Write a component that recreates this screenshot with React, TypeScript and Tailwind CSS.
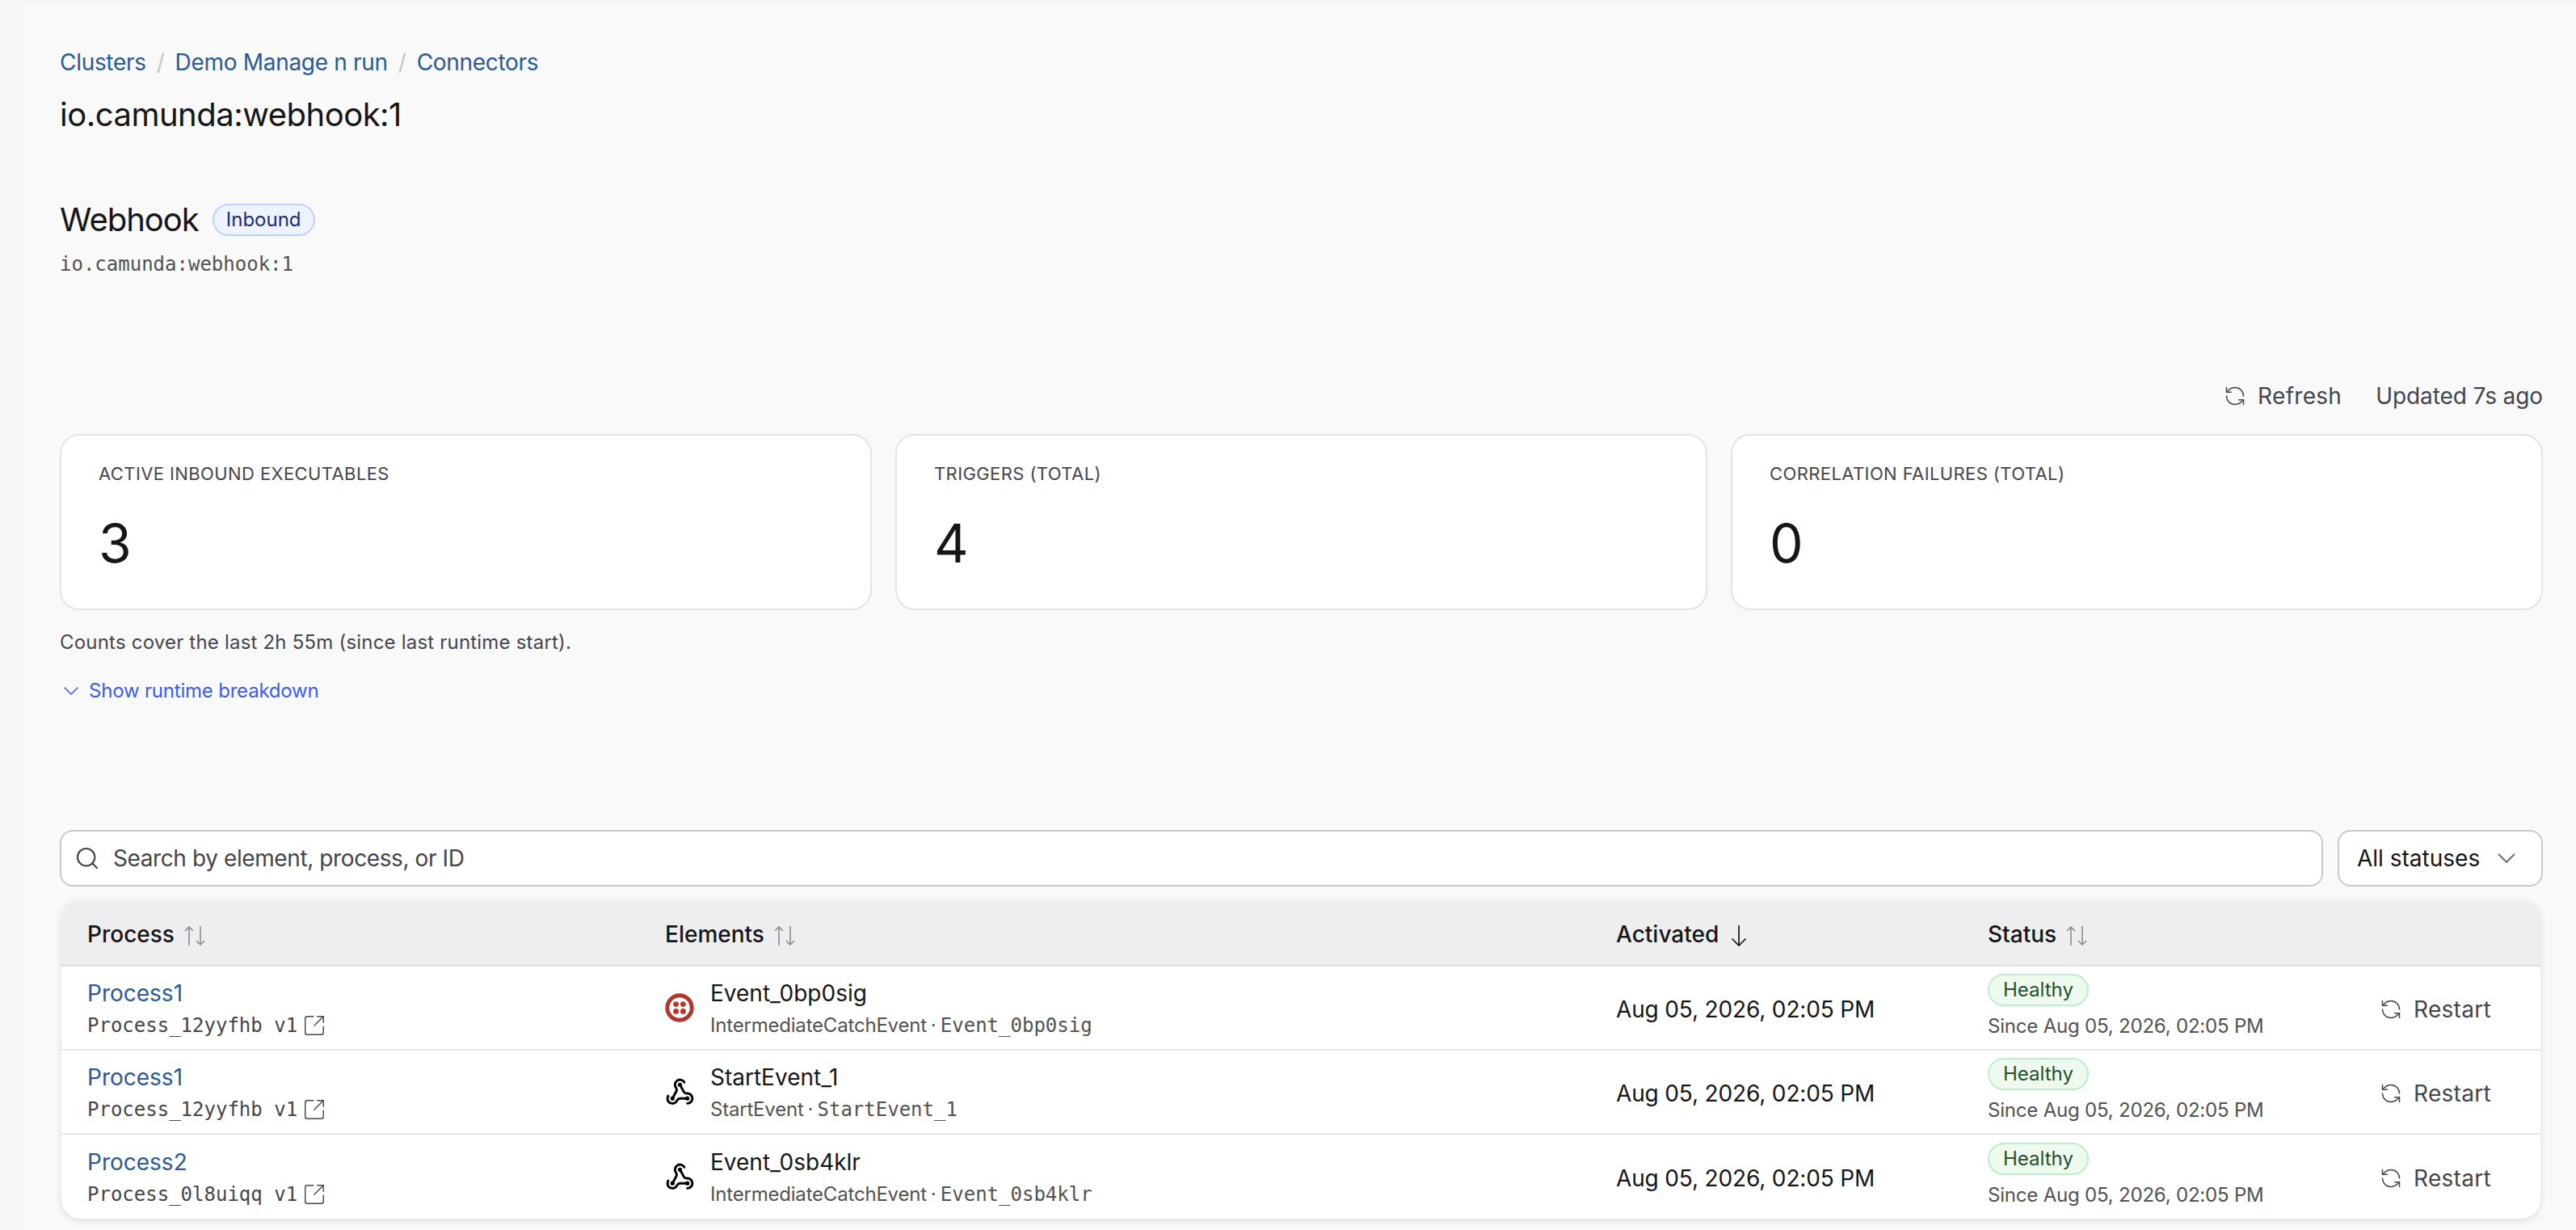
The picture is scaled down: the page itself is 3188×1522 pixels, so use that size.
import { ChevronDown, RefreshCcw, Search, SquareArrowOutUpRight } from 'lucide-react';

const sans = "font-['Inter','Noto_Sans',sans-serif]";
const mono = "font-['DejaVu_Sans_Mono','Liberation_Mono',monospace]";

interface Row {
  name: string;
  processId: string;
  element: string;
  kind: string;
  elementId: string;
  icon: 'twilio' | 'webhook';
}

const rows: Row[] = [
  { name: 'Process1', processId: 'Process_12yyfhb v1', element: 'Event_0bp0sig', kind: 'IntermediateCatchEvent', elementId: 'Event_0bp0sig', icon: 'twilio' },
  { name: 'Process1', processId: 'Process_12yyfhb v1', element: 'StartEvent_1', kind: 'StartEvent', elementId: 'StartEvent_1', icon: 'webhook' },
  { name: 'Process2', processId: 'Process_0l8uiqq v1', element: 'Event_0sb4klr', kind: 'IntermediateCatchEvent', elementId: 'Event_0sb4klr', icon: 'webhook' },
];

const stats = [
  { label: 'ACTIVE INBOUND EXECUTABLES', value: '3' },
  { label: 'TRIGGERS (TOTAL)', value: '4' },
  { label: 'CORRELATION FAILURES (TOTAL)', value: '0' },
];

function TwilioIcon() {
  return (
    <svg viewBox="0 0 36 36" className="w-9 h-9 shrink-0">
      <circle cx="18" cy="18" r="15.2" fill="none" stroke="#b3352b" strokeWidth="5" />
      <circle cx="13.6" cy="13.6" r="3.4" fill="#b3352b" />
      <circle cx="22.4" cy="13.6" r="3.4" fill="#b3352b" />
      <circle cx="13.6" cy="22.4" r="3.4" fill="#b3352b" />
      <circle cx="22.4" cy="22.4" r="3.4" fill="#b3352b" />
    </svg>
  );
}

function WebhookIcon() {
  return (
    <svg viewBox="0 0 24 24" className="w-[37px] h-[37px] -mx-[0.5px] shrink-0" fill="none" stroke="#000" strokeWidth="1.9" strokeLinecap="round" strokeLinejoin="round">
      <path d="M18 16.98h-5.99c-1.1 0-1.95.94-2.48 1.9A4 4 0 0 1 2 17c.01-.7.2-1.4.57-2" />
      <path d="m6 17 3.13-5.78c.53-.97.1-2.18-.5-3.1a4 4 0 1 1 6.89-4.06" />
      <path d="m12 6 3.13 5.73C15.66 12.7 16.9 13 18 13a4 4 0 0 1 0 8" />
      <circle cx="12" cy="6" r="1.7" fill="#000" stroke="none" />
      <circle cx="6" cy="17" r="1.7" fill="#000" stroke="none" />
      <circle cx="18" cy="17" r="1.7" fill="#000" stroke="none" />
    </svg>
  );
}

function SortIcon() {
  return (
    <svg viewBox="0 0 26 24" className="w-[26px] h-6 ml-3 mt-1" fill="none" stroke="#8d8d8d" strokeWidth="1.6">
      <path d="M6 24V1M1 6l5-5 5 5" />
      <path d="M20 0v23M15 18l5 5 5-5" />
    </svg>
  );
}

function SortDownIcon() {
  return (
    <svg viewBox="0 0 24 28" className="w-6 h-7 ml-[13px] mt-1" fill="none" stroke="#161616" strokeWidth="1.7">
      <path d="M12 1v25M3.500 17.500 12 26l8.500-8.500" />
    </svg>
  );
}

function Header({ title, active }: { title: string; active?: boolean }) {
  return (
    <div className="flex items-center">
      <span className="text-[28px] leading-9 font-medium text-[#161616]">{title}</span>
      {active ? <SortDownIcon /> : <SortIcon />}
    </div>
  );
}

export default function App() {
  return (
    <div className={`${sans} min-h-screen bg-[#f7f7f7] pt-2 pl-[25px] overflow-hidden`}>
      <div className="h-[1514px] bg-[#f9f9f9] pl-[49px] pr-[41px] pt-[49px]">
        {/* breadcrumb */}
        <nav className="flex items-center text-[28px] leading-10 tracking-[-0.3px] text-[#285a9c]">
          <span>Clusters</span>
          <span className="mx-[13px] text-[#c6c6c6]">/</span>
          <span>Demo Manage n run</span>
          <span className="mx-[13px] text-[#c6c6c6]">/</span>
          <span>Connectors</span>
        </nav>
        <h1 className="mt-[21px] text-[40px] leading-[48px] tracking-[-0.5px] text-[#161616]">io.camunda:webhook:1</h1>

        {/* connector */}
        <div className="mt-[82px] flex items-center">
          <h2 className="text-[40px] leading-[48px] tracking-[-1px] text-[#161616]">Webhook</h2>
          <span className="ml-[17px] h-10 px-[15px] flex items-center rounded-full border-2 border-[#bcd2ff] bg-[#edf3ff] text-[24px] text-[#1c2a78]">Inbound</span>
        </div>
        <p className={`${mono} mt-[15px] text-[24px] leading-8 text-[#525252]`}>io.camunda:webhook:1</p>

        {/* refresh */}
        <div className="mt-[129px] flex justify-end items-center h-9 text-[28px] text-[#45454d]">
          <RefreshCcw className="w-7 h-7 mr-[14px]" strokeWidth={1.3} />
          <span className="tracking-[0.3px]">Refresh</span>
          <span className="ml-[42px] tracking-[-0.1px]">Updated 7s ago</span>
        </div>

        {/* stats */}
        <div className="mt-[29px] grid grid-cols-3 gap-[29px]">
          {stats.map((s) => (
            <div key={s.label} className="h-[218px] bg-white rounded-3xl border-2 border-[#e4e4e4] pl-[46px] pt-[31px]">
              <div className="text-[22px] leading-8 tracking-[0.4px] text-[#45454d]">{s.label}</div>
              <div className="mt-[34px] text-[66px] leading-[72px] font-normal text-[#161616]">{s.value}</div>
            </div>
          ))}
        </div>
        <p className="mt-6 text-[24px] leading-8 tracking-[0.2px] text-[#45454d]">Counts cover the last 2h 55m (since last runtime start).</p>
        <button className="mt-7 flex items-center text-[24px] leading-8 tracking-[-0.2px] text-[#3c5cf5]">
          <ChevronDown className="w-8 h-8 mr-[6px] -ml-[2px]" strokeWidth={1.15} />
          Show runtime breakdown
        </button>

        {/* filters */}
        <div className="mt-[156px] flex gap-[18px]">
          <div className="flex-1 h-[70px] bg-white rounded-2xl border-2 border-[#c9c9cd] flex items-center pl-4 text-[28px] tracking-[-0.4px] text-[#45454d]">
            <Search className="w-8 h-8 mr-[16px]" strokeWidth={1.6} />
            Search by element, process, or ID
          </div>
          <div className="w-[254px] h-[70px] bg-white rounded-2xl border-2 border-[#c9c9cd] flex items-center pl-[22px] text-[28px] text-[#161616]">
            All statuses
            <ChevronDown className="w-[38px] h-[38px] ml-[14px] text-[#6f6f6f]" strokeWidth={1.3} />
          </div>
        </div>

        {/* table */}
        <div className="mt-[17px] ml-[2px] mr-[3px] rounded-3xl bg-white overflow-hidden shadow-[0_2px_8px_rgba(0,0,0,0.12)]">
          <div className="grid grid-cols-[715px_1177px_460px_1fr_229px] items-center h-[82px] pt-[3px] bg-[#eeeef0] border-b-2 border-[#e0e0e0] [&>*]:pl-8">
            <Header title="Process" />
            <Header title="Elements" />
            <Header title="Activated" active />
            <Header title="Status" />
            <div />
          </div>
          {rows.map((r, i) => (
            <div key={i} className="grid grid-cols-[715px_1177px_460px_1fr_229px] items-center h-[104px] border-b-2 border-[#e8e8e8] last:border-b-0 [&>*]:pl-8">
              <div>
                <div className="text-[28px] leading-10 text-[#285a9c]">{r.name}</div>
                <div className={`${mono} mt-1 flex items-center text-[24px] leading-8 text-[#45454d]`}>
                  {r.processId}
                  <SquareArrowOutUpRight className="w-[30px] h-[30px] ml-[6px]" strokeWidth={1.15} />
                </div>
              </div>
              <div className="flex items-center">
                {r.icon === 'twilio' ? <TwilioIcon /> : <WebhookIcon />}
                <div className="ml-[20px]">
                  <div className="text-[28px] leading-10 text-[#161616]">{r.element}</div>
                  <div className="mt-1 text-[24px] leading-8 text-[#525252]">
                    <span className="tracking-[-0.2px]">{r.kind}</span>
                    <span className="mx-[5px]">·</span>
                    <span className={mono}>{r.elementId}</span>
                  </div>
                </div>
              </div>
              <div className="pt-[3px] text-[28px] tracking-[-0.15px] text-[#161616]">Aug 05, 2026, 02:05 PM</div>
              <div className="pb-1">
                <span className="inline-flex items-center h-10 px-[17px] rounded-full border-2 border-[#bdefc6] bg-[#eefaf0] text-[24px] text-[#24512c]">Healthy</span>
                <div className="mt-[9px] text-[24px] leading-8 tracking-[-0.2px] text-[#525252]">Since Aug 05, 2026, 02:05 PM</div>
              </div>
              <div className="pt-[3px] flex items-center text-[28px] text-[#45454d]">
                <RefreshCcw className="w-7 h-7 mr-[14px] -ml-[2px]" strokeWidth={1.3} />
                <span className="tracking-[0.3px]">Restart</span>
              </div>
            </div>
          ))}
        </div>
      </div>
    </div>
  );
}
